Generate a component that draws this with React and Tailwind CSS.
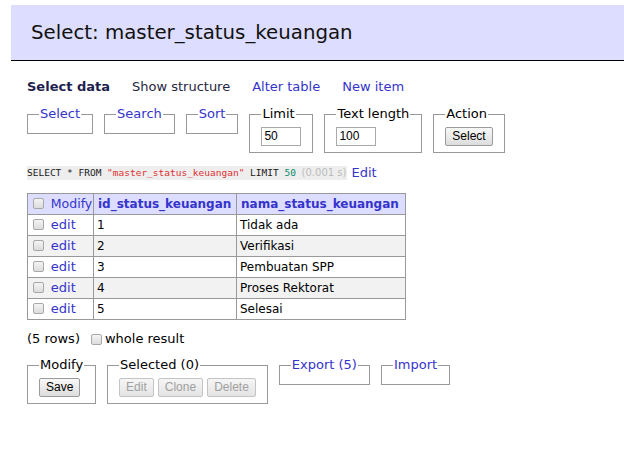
import React from 'react'

const font = "font-['DejaVu_Sans',Verdana,sans-serif]"

const Check = () => (
  <span className="inline-block w-[11px] h-[11px] border border-[#a8a8a8] rounded-[2px] bg-gradient-to-b from-[#f4f4f4] to-[#dcdcdc] align-[-1px]" />
)

const Button = ({ children, disabled }) => (
  <span
    className={
      "inline-block h-[19px] leading-[17px] px-[6px] border rounded-[2px] text-[12px] font-['Liberation_Sans',Arial,sans-serif] bg-gradient-to-b " +
      (disabled
        ? 'border-[#c4c4c4] text-[#a0a0a0] from-[#f6f6f6] to-[#e4e4e4]'
        : 'border-[#9a9a9a] text-black from-[#f8f8f8] to-[#dddddd]')
    }
  >
    {children}
  </span>
)

const Input = ({ value }) => (
  <span className="inline-block w-[40px] h-[19px] leading-[17px] px-[2px] border border-[#a9a9a9] bg-white text-[12px] font-['Liberation_Sans',Arial,sans-serif] text-black">
    {value}
  </span>
)

const Box = ({ legend, link, children }) => (
  <fieldset className="border border-[#999] px-[11px] pb-[6px] min-w-0">
    <legend className={'px-[1px] leading-[16px] ' + (link ? 'text-[#3434cc]' : 'text-black')}>{legend}</legend>
    {children ? <div className="mt-[5px] flex gap-[4px]">{children}</div> : <div className="h-[5px]" />}
  </fieldset>
)

const rows = [
  ['1', 'Tidak ada'],
  ['2', 'Verifikasi'],
  ['3', 'Pembuatan SPP'],
  ['4', 'Proses Rektorat'],
  ['5', 'Selesai'],
]

export default function App() {
  return (
    <div className={`${font} text-[13px] text-black bg-white min-h-[465px] w-[624px] overflow-hidden pl-[27px] pt-[5px]`}>
      {/* Title */}
      <div className="-ml-[16px] h-[56px] bg-[#ddf] border-b border-black pl-[20px] flex items-center text-[19.8px] text-[#111]">
        Select: master_status_keuangan
      </div>

      {/* Links */}
      <div className="mt-[18px] flex gap-[22px] leading-[16px]">
        <span className="font-bold text-[#1e1e4e]">Select data</span>
        <span className="text-[#262640]">Show structure</span>
        <span className="text-[#3434cc]">Alter table</span>
        <span className="text-[#3434cc]">New item</span>
      </div>

      {/* Options */}
      <div className="mt-[11px] flex items-start gap-[11px]">
        <Box legend="Select" link />
        <Box legend="Search" link />
        <Box legend="Sort" link />
        <Box legend="Limit">
          <Input value="50" />
        </Box>
        <Box legend="Text length">
          <Input value="100" />
        </Box>
        <Box legend="Action">
          <Button>Select</Button>
        </Box>
      </div>

      {/* Query */}
      <div className="mt-[13px] flex items-center leading-[14px]">
        <span className="bg-[#eee] font-['DejaVu_Sans_Mono',monospace] text-[9.5px] text-[#1a1a1a] pr-[1px]">
          SELECT * FROM <span className="text-[#e03030]">"master_status_keuangan"</span> LIMIT{' '}
          <span className="text-[#0a8a6a]">50</span>{' '}
          <span className={`${font} text-[#bbb] text-[10px]`}>(0.001 s)</span>
        </span>
        <span className="ml-[4px] text-[#3434cc] text-[13px]">Edit</span>
      </div>

      {/* Table */}
      <table className="mt-[13px] table-fixed w-[378px] border-collapse border border-[#999] leading-[16px] text-[12px]">
        <colgroup>
          <col className="w-[66px]" />
          <col className="w-[143px]" />
          <col className="w-[169px]" />
        </colgroup>
        <thead>
          <tr className="bg-[#ddf] h-[21px]">
            <td className="border border-[#999] px-[5px] whitespace-nowrap">
              <Check /> <span className="text-[#3434cc] ml-[3px] text-[12.5px]">Modify</span>
            </td>
            <th className="border border-[#999] px-[4px] text-left font-bold text-[#3434cc] whitespace-nowrap">id_status_keuangan</th>
            <th className="border border-[#999] px-[4px] text-left font-bold text-[#3434cc] whitespace-nowrap">nama_status_keuangan</th>
          </tr>
        </thead>
        <tbody>
          {rows.map(([id, name], i) => (
            <tr key={id} className={'h-[21px] ' + (i % 2 ? 'bg-[#f2f2f2]' : 'bg-white')}>
              <td className="border border-[#999] px-[5px] whitespace-nowrap">
                <Check /> <span className="text-[#3434cc] ml-[3px] text-[13px]">edit</span>
              </td>
              <td className="border border-[#999] px-[3px]">{id}</td>
              <td className="border border-[#999] px-[3px]">{name}</td>
            </tr>
          ))}
        </tbody>
      </table>

      {/* Rows */}
      <div className="mt-[11px] leading-[16px] flex items-center">
        <span>(5 rows)</span>
        <span className="ml-[11px] mr-[3px] flex">
          <Check />
        </span>
        <span>whole result</span>
      </div>

      {/* Actions */}
      <div className="mt-[10px] flex items-start gap-[11px]">
        <Box legend="Modify">
          <Button>Save</Button>
        </Box>
        <Box legend="Selected (0)">
          <Button disabled>Edit</Button>
          <Button disabled>Clone</Button>
          <Button disabled>Delete</Button>
        </Box>
        <Box legend="Export (5)" link />
        <Box legend="Import" link />
      </div>
    </div>
  )
}
